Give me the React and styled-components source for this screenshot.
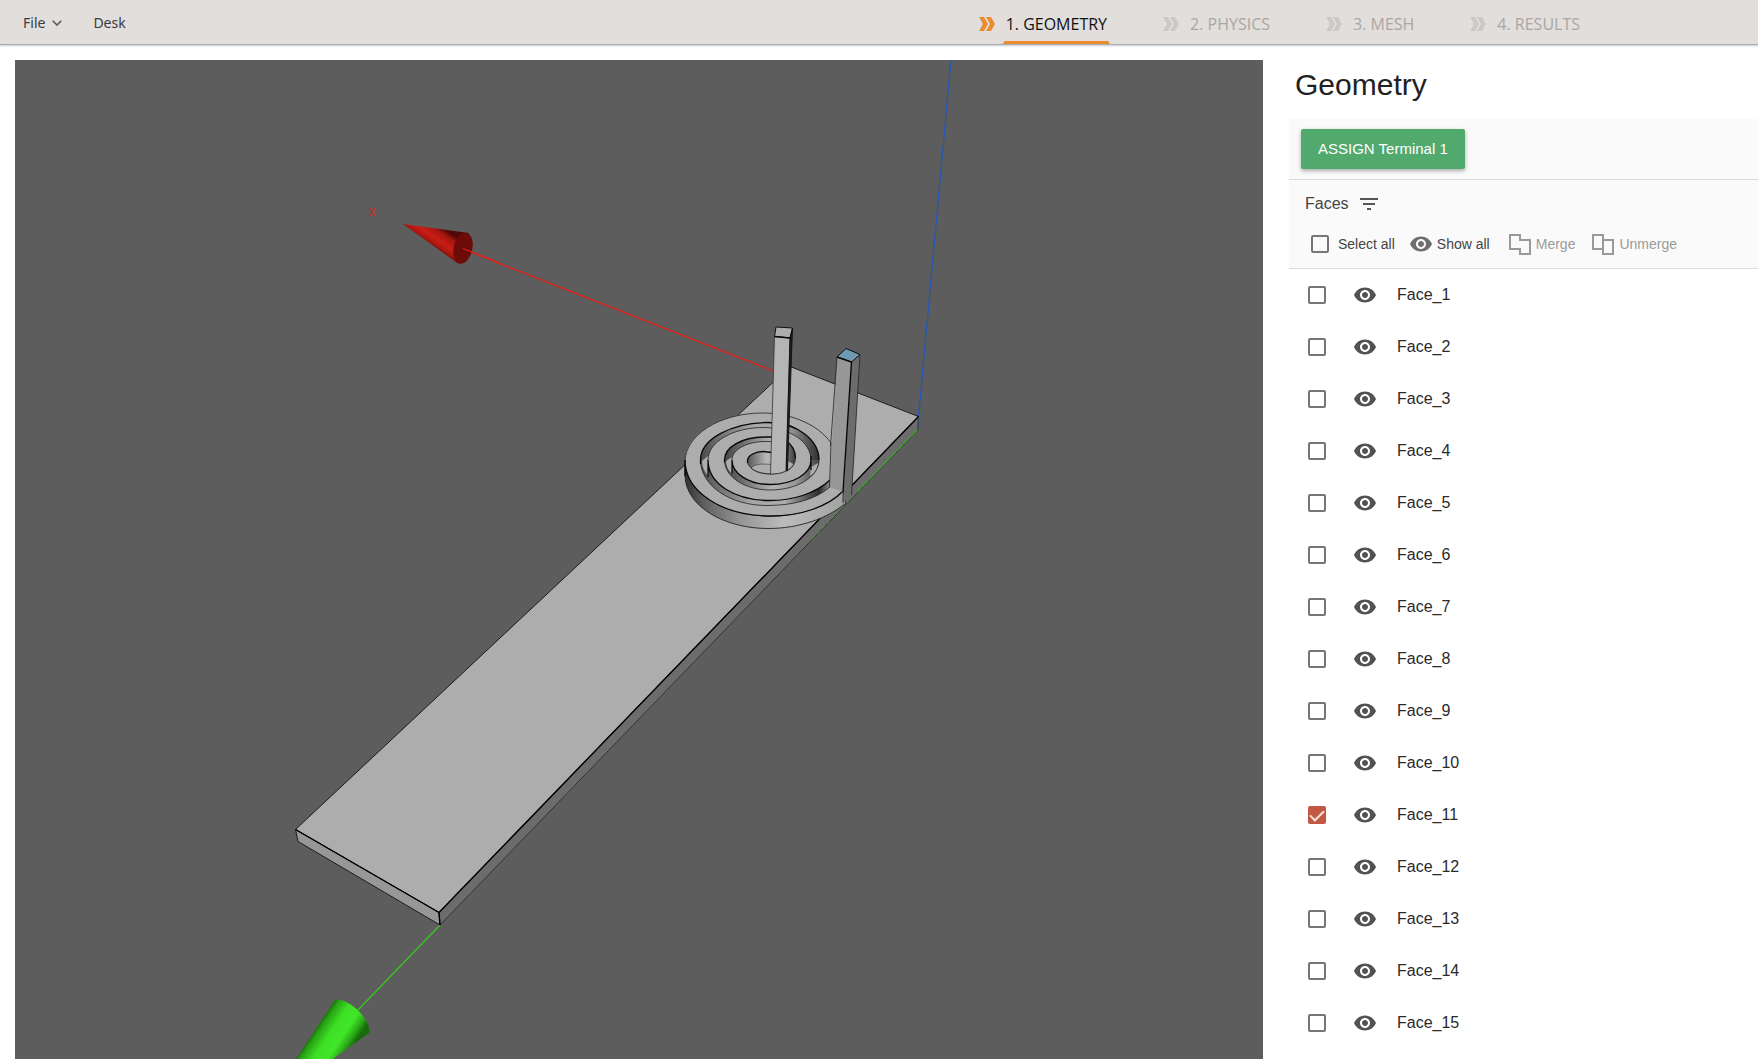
import React, { useState } from "react";
import styled, { createGlobalStyle } from "styled-components";

const GlobalStyle = createGlobalStyle`
  * { box-sizing: border-box; }
  html, body, #root { height: 100%; }
  body {
    margin: 0;
    overflow: hidden;
    background: #fff;
    font-family: "Liberation Sans", Arial, sans-serif;
    color: #212121;
  }
  button { border: 0; padding: 0; background: none; font: inherit; color: inherit; cursor: pointer; }
`;

const Page = styled.div`
  display: flex;
  flex-direction: column;
  height: 100%;
`;

const Header = styled.header`
  flex: none;
  display: flex;
  justify-content: space-between;
  height: 45px;
  padding: 0 176px 0 23px;
  background: #e1dedb;
  border-bottom: 1px solid #a9abab;
  box-shadow: 0 1px 2px rgba(70, 90, 110, 0.3);
  font-family: "Noto Sans", "Open Sans", sans-serif;
`;

const Menu = styled.nav`
  display: flex;
  align-items: center;
  gap: 31px;
  padding-top: 2px;
`;

const MenuButton = styled.button`
  display: flex;
  align-items: center;
  gap: 7px;
  font-size: 14px;
  line-height: 20px;
  color: #3c3c3c;
`;

const Steps = styled.nav`
  display: flex;
  gap: 54px;
`;

const Step = styled.a`
  display: flex;
  align-items: center;
  gap: 9px;
  color: ${(p) => (p.$active ? "#111" : "#a9a7a5")};
  text-decoration: none;
  font-family: "Open Sans", "Noto Sans", sans-serif;
  font-size: 16px;
  line-height: 20px;
  svg { color: ${(p) => (p.$active ? "#ea8c2f" : "#cbc8c5")}; margin-top: 4px; }
`;

const StepLabel = styled.span`
  position: relative;
  display: flex;
  align-items: center;
  height: 44px;
  padding: 3px 2px 0;
  &::after {
    content: "";
    display: ${(p) => (p.$active ? "block" : "none")};
    position: absolute;
    left: -1px;
    right: -1px;
    bottom: 0;
    height: 3px;
    background: #ea8c2f;
    clip-path: polygon(2px 0, calc(100% - 2px) 0, 100% 100%, 0 100%);
  }
`;

const Workspace = styled.main`
  flex: 1;
  min-height: 0;
  display: flex;
  gap: 26px;
  padding: 15px 0 0 15px;
`;

const Viewport = styled.section`
  flex: 1;
  min-width: 0;
  overflow: hidden;
  background: #5d5d5d;
  svg { display: block; width: 100%; height: 100%; }
`;

const Panel = styled.aside`
  flex: none;
  width: 469px;
  overflow: hidden;
`;

const Title = styled.h1`
  margin: 0;
  padding: 7px 0 16px 6px;
  font-size: 30px;
  line-height: 36px;
  font-weight: 400;
`;

const Tools = styled.div`
  background: #fafafa;
  border-bottom: 1px solid #dcdcdc;
`;

const AssignBar = styled(Tools)`
  padding: 10px 12px;
`;

const AssignButton = styled.button`
  display: block;
  height: 40px;
  padding: 0 17px;
  border-radius: 2px;
  background: #52a96d;
  color: #fff;
  font-size: 15px;
  line-height: 20px;
  box-shadow: 0 2px 4px rgba(0, 0, 0, 0.32);
`;

const FacesBar = styled(Tools)`
  height: 89px;
`;

const FacesHeading = styled.div`
  display: flex;
  align-items: center;
  gap: 8px;
  padding: 12px 16px 0;
  color: #444;
  h2 { margin: 0; font-size: 16px; line-height: 24px; font-weight: 400; }
`;

const FilterButton = styled.button`
  display: flex;
  color: #555;
`;

const Actions = styled.div`
  display: flex;
  align-items: center;
  gap: 14px;
  padding: 16px 22px 0;
  font-size: 14px;
  line-height: 24px;
`;

const MergeActions = styled.div`
  display: flex;
  gap: 16px;
  margin-left: 4px;
`;

const SelectAll = styled.label`
  display: flex;
  align-items: center;
  gap: 9px;
  color: #444;
`;

const Action = styled.button`
  display: flex;
  align-items: center;
  gap: 4px;
  line-height: 24px;
  color: ${(p) => (p.disabled ? "#9b9b9b" : "#444")};
  svg { color: ${(p) => (p.disabled ? "#999" : "#6e6e6e")}; }
`;

const Check = styled.input`
  appearance: none;
  flex: none;
  display: grid;
  place-items: center;
  width: 18px;
  height: 18px;
  margin: 0;
  border: 2px solid #757575;
  border-radius: 2px;
  background: transparent;
  &:checked { background: #c25743; border-color: #c25743; }
  &:checked::before {
    content: "";
    width: 12px;
    height: 6px;
    margin: -3px 0 0 0;
    border: solid #f7e4e0;
    border-width: 0 0 2px 2px;
    transform: rotate(-45deg);
  }
`;

const FaceList = styled.ul`
  margin: 0;
  padding: 0;
  list-style: none;
`;

const FaceRow = styled.li`
  display: flex;
  align-items: center;
  height: 52px;
  padding-left: 19px;
`;

const EyeButton = styled.button`
  display: flex;
  margin: 0 20px 0 27px;
  color: #505254;
`;

const FaceName = styled.label`
  font-size: 16px;
  line-height: 24px;
  color: #2a2a2a;
`;

const EyeIcon = () => (
  <svg width="24" height="24" viewBox="0 0 24 24" fill="currentColor" aria-hidden="true">
    <path d="M12 4.5C7 4.5 2.73 7.61 1 12c1.73 4.39 6 7.5 11 7.5s9.27-3.11 11-7.5c-1.73-4.39-6-7.5-11-7.5zM12 17c-2.76 0-5-2.24-5-5s2.24-5 5-5 5 2.24 5 5-2.24 5-5 5zm0-8c-1.66 0-3 1.34-3 3s1.34 3 3 3 3-1.34 3-3-1.34-3-3-3z" />
  </svg>
);

const FilterIcon = () => (
  <svg width="24" height="24" viewBox="0 0 24 24" fill="currentColor" aria-hidden="true">
    <path d="M10 18h4v-2h-4v2zM3 6v2h18V6H3zm3 7h12v-2H6v2z" />
  </svg>
);

const MergeIcon = () => (
  <svg width="24" height="24" viewBox="0 0 24 24" fill="none" stroke="currentColor" strokeWidth="2" aria-hidden="true">
    <path d="M2 3h10v5h10v14H12v-5H2z" />
  </svg>
);

const UnmergeIcon = () => (
  <svg width="24" height="24" viewBox="0 0 24 24" fill="none" stroke="currentColor" strokeWidth="2" aria-hidden="true">
    <path d="M12 17H2V3h10v5M12 8h10v14H12z" />
  </svg>
);

const DoubleChevron = () => (
  <svg width="16" height="14" viewBox="0 0 16 14" fill="currentColor" aria-hidden="true">
    <path d="M0 0h5l4 7-4 7H0l4-7zM7 0h5l4 7-4 7H7l4-7z" />
  </svg>
);

const CaretIcon = () => (
  <svg width="10" height="6" viewBox="0 0 10 6" fill="none" stroke="#555" strokeWidth="1.500" aria-hidden="true">
    <path d="M.7.7 5 5 9.300.7" />
  </svg>
);

const Stops = ({ colors }) =>
  colors.map(([at, color]) => <stop key={at} offset={at} stopColor={color} />);

function Scene() {
  return (
    <svg viewBox="15 60 1248 999" preserveAspectRatio="xMinYMin slice" role="img" aria-label="Model view">
      <defs>
        <linearGradient id="outerWall" gradientUnits="userSpaceOnUse" x1="685" x2="845" y1="0" y2="0">
          <Stops colors={[[0, "#303030"], [0.12, "#606060"], [0.35, "#969696"], [0.62, "#bcbcbc"], [1, "#a2a2a2"]]} />
        </linearGradient>
        <linearGradient id="grooveOuter" gradientUnits="userSpaceOnUse" x1="700" x2="830" y1="0" y2="0">
          <Stops colors={[[0, "#484848"], [0.15, "#727272"], [0.4, "#a6a6a6"], [0.65, "#adadad"], [0.82, "#5a5a5a"], [0.92, "#2e2e2e"], [1, "#929292"]]} />
        </linearGradient>
        <linearGradient id="grooveInner" gradientUnits="userSpaceOnUse" x1="724" x2="819" y1="0" y2="0">
          <Stops colors={[[0, "#444"], [0.15, "#646464"], [0.5, "#b4b4b4"], [0.75, "#999"], [1, "#444"]]} />
        </linearGradient>
        <linearGradient id="holeWall" gradientUnits="userSpaceOnUse" x1="747" x2="796" y1="0" y2="0">
          <Stops colors={[[0, "#555"], [0.4, "#b8b8b8"], [0.75, "#909090"], [1, "#333"]]} />
        </linearGradient>
        <linearGradient id="redCone" gradientUnits="userSpaceOnUse" x1="440" y1="226" x2="426" y2="247">
          <Stops colors={[[0, "#4f0906"], [0.2, "#a31510"], [0.5, "#ca1d15"], [0.72, "#a81610"], [1, "#3a0604"]]} />
        </linearGradient>
        <linearGradient id="greenCone" gradientUnits="userSpaceOnUse" x1="318" y1="1020" x2="354" y2="1044">
          <Stops colors={[[0, "#0f5205"], [0.16, "#28a314"], [0.4, "#3de024"], [0.68, "#42e629"], [0.86, "#2cab19"], [1, "#176b0a"]]} />
        </linearGradient>
      </defs>

      {/* axes */}
      <path d="M951 60 918.500 417" stroke="#2459b4" strokeWidth="1.300" />
      <path d="M440 925 357 1011" stroke="#35c81c" strokeWidth="1.300" />
      <path d="M463 249 776 372" stroke="#e0211a" strokeWidth="1.300" />
      <text x="369" y="216" fontSize="10" fontFamily="DejaVu Sans, sans-serif" fill="#e0211a">X</text>

      <path d="M403 224 469 233 458 263.500z" fill="url(#redCone)" />
      <ellipse cx="463" cy="248.300" rx="9.300" ry="15.800" transform="rotate(13 463 248.300)" fill="#6c0b08" />
      <path d="M463 248.500 500 263" stroke="#e0211a" strokeWidth="1.300" />

      <path d="M335 1000C345 996 372 1018 369 1033L333 1059H296z" fill="url(#greenCone)" />

      {/* substrate */}
      <g strokeLinejoin="round">
        <path d="M295.500 829.500 790 366.500 918.500 416.500 439 912.500z" fill="#adadad" stroke="#1c1c1c" />
        <path d="M295.500 829.500 439 912.500 440 925 298 841.500z" fill="#979797" stroke="#1c1c1c" />
        <path d="M918.500 416.500 918 430 440 925 439 912.500z" fill="#6c6c6c" stroke="#2a2a2a" strokeWidth=".8" />
        <path d="M295.500 829.500 439 912.500 918.500 416.500M439 912.500 440 925" fill="none" stroke="#000" strokeWidth="1.400" />
        <path d="M918.500 417 918 428" stroke="#2b456f" />
        <path d="M917 430 858 491" stroke="#36ad22" strokeWidth="1.200" strokeDasharray="9 1" />
        <path d="M858 491 812 539" stroke="#36ad22" strokeDasharray="3 4" />
      </g>

      {/* coil */}
      <path
        d="M685 460V476C686 507 725 528.500 768 528.500 800 528.500 828 518 846 503L843 490C828 507 800 516 771 516 722 516 685 492 685 460z"
        fill="url(#outerWall)" stroke="#222" strokeWidth=".9"
      />
      <path
        d="M685 460C685 436 718 413 763 413 790 413 818 424 831 443L843 491C828 507 800 516 771 516 722 516 685 492 685 460z"
        fill="#adadad"
      />
      <path
        d="M830 487C815 500 792 505.500 767 505.500 729 505.500 700.500 485 700.500 460 700.500 439 732 422.500 768 422.500 797 422.500 819 440 819 460L811 460C811 442 790 427.500 763 427.500 733 427.500 708 442 708 460 708 484 735 500.500 770 500.500 792 500.500 815 494 830 480z"
        fill="url(#grooveOuter)"
      />
      <path
        d="M819 460C819 477 797 490 770 490 745 490 724.500 477 724.500 460 724.500 447 742 437 765 437L776 439V442L765 441.500C748 441.500 732 449 732 460 732 473 748 484.500 770 484.500 793 484.500 811 474 811 460z"
        fill="url(#grooveInner)"
      />
      <path d="M702 461 708 456V476C704 471 702 466 702 461zM726 461 732 457V474C728 470 726 466 726 461zM811 467 818 463C818 468 815 473 810 476z" fill="#adadad" />
      <path d="M747.500 461C747.500 455 756 451.500 765 451.500L786 440C792 444 795.500 451 795.500 458 795.500 467 786 474 771 474 757 474 747.500 468 747.500 461z" fill="url(#holeWall)" />
      <path d="M751 468C756 463 764 464 772 464.500V474C762 474 755 472 751 468zM787 460 794 464C792 468 790 469 787 471z" fill="#adadad" stroke="#333" strokeWidth=".6" />

      <g fill="none" stroke="#222" strokeWidth=".8">
        <path d="M685 462C685 436 718 413 763 413 790 413 818 424 831 443" />
        <path d="M830 487C815 500 792 505.500 767 505.500 729 505.500 700.500 485 700.500 460" />
        <path d="M708 460C708 442 733 427.500 763 427.500 790 427.500 811 442 811 460" />
        <path d="M819 460C819 477 797 490 770 490 745 490 724.500 477 724.500 460" />
        <path d="M732 460C732 449 748 441.500 765 441.500H776" />
        <path d="M795.500 458C795.500 467 786 474 771 474 757 474 747.500 468 747.500 461" />
      </g>
      <g fill="none" stroke="#080808" strokeWidth="1.300">
        <path d="M685 460V476M685 460C685 492 722 516 771 516 800 516 828 507 843 491" />
        <path d="M700.500 464V460C700.500 439 732 422.500 768 422.500 797 422.500 819 440 819 460" />
        <path d="M830 480C815 494 792 500.500 770 500.500 735 500.500 708 484 708 460V477" />
        <path d="M811 456V470M811 460C811 474 793 484.500 770 484.500 748 484.500 732 473 732 460V474" />
        <path d="M724.500 462V460C724.500 447 742 437 765 437H772M786 441C792 444 795.500 451 795.500 458" />
        <path d="M747.500 463V461C747.500 455 756 451.500 763 451.500L772 452.500" />
      </g>

      {/* terminal posts */}
      <path d="M776 327 792.500 328 790 338 774.500 336.500z" fill="#adadad" stroke="#111" />
      <path d="M774.500 336.500 790 338 786.500 471Q779 474.500 770.500 474z" fill="#b5b5b5" stroke="#333" strokeWidth=".8" />
      <path d="M792.500 328 790 338 786 471 787.500 470z" fill="#222" stroke="#080808" strokeWidth=".8" />
      <path d="M774.500 336.500 790 338" stroke="#080808" strokeWidth="1.400" />

      <path d="M837 357 851.500 362 843 492 829.500 487z" fill="#979797" />
      <path d="M851.500 362 860 354.500 851.500 495 843 503z" fill="#6c6c6c" />
      <path d="M846 348.500 860 354.500 851.500 362 837 357z" fill="#6e9bb2" stroke="#0c0c0c" strokeLinejoin="round" />
      <path d="M837 357 830.500 446M829.500 487 831 443M860 354.500 851.500 495M843 503V492" fill="none" stroke="#222" strokeWidth=".8" />
      <path d="M837 357 851.500 362 843 492" fill="none" stroke="#080808" strokeWidth="1.400" />
    </svg>
  );
}

const STEPS = ["1. GEOMETRY", "2. PHYSICS", "3. MESH", "4. RESULTS"];
const FACES = Array.from({ length: 15 }, (_, i) => `Face_${i + 1}`);

export default function App() {
  const [selected, setSelected] = useState(["Face_11"]);
  const toggle = (name) =>
    setSelected((s) => (s.includes(name) ? s.filter((n) => n !== name) : [...s, name]));
  const allSelected = selected.length === FACES.length;

  return (
    <Page>
      <GlobalStyle />
      <Header>
        <Menu>
          <MenuButton type="button">File <CaretIcon /></MenuButton>
          <MenuButton type="button">Desk</MenuButton>
        </Menu>
        <Steps>
          {STEPS.map((step, i) => (
            <Step key={step} href={`#step-${i + 1}`} $active={i === 0}>
              <DoubleChevron />
              <StepLabel $active={i === 0}>{step}</StepLabel>
            </Step>
          ))}
        </Steps>
      </Header>
      <Workspace>
        <Viewport><Scene /></Viewport>
        <Panel>
          <Title>Geometry</Title>
          <AssignBar>
            <AssignButton type="button">ASSIGN Terminal 1</AssignButton>
          </AssignBar>
          <FacesBar>
            <FacesHeading>
              <h2>Faces</h2>
              <FilterButton type="button" aria-label="Filter"><FilterIcon /></FilterButton>
            </FacesHeading>
            <Actions>
              <SelectAll>
                <Check
                  type="checkbox"
                  checked={allSelected}
                  onChange={() => setSelected(allSelected ? [] : FACES)}
                />
                Select all
              </SelectAll>
              <Action type="button"><EyeIcon />Show all</Action>
              <MergeActions>
                <Action type="button" disabled><MergeIcon />Merge</Action>
                <Action type="button" disabled><UnmergeIcon />Unmerge</Action>
              </MergeActions>
            </Actions>
          </FacesBar>
          <FaceList>
            {FACES.map((name) => (
              <FaceRow key={name}>
                <Check
                  type="checkbox"
                  id={name}
                  checked={selected.includes(name)}
                  onChange={() => toggle(name)}
                />
                <EyeButton type="button" aria-label={`Show ${name}`}><EyeIcon /></EyeButton>
                <FaceName htmlFor={name}>{name}</FaceName>
              </FaceRow>
            ))}
          </FaceList>
        </Panel>
      </Workspace>
    </Page>
  );
}
